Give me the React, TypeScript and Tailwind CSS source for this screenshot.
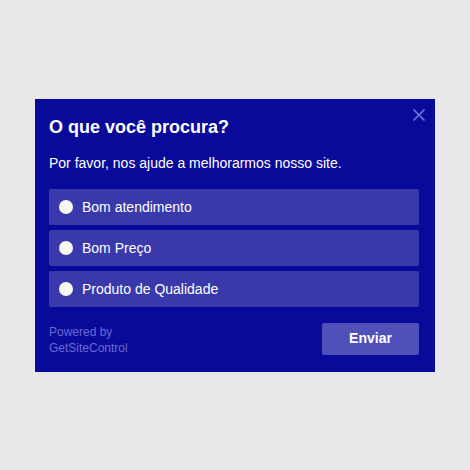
import { useState } from 'react'

const options = ['Bom atendimento', 'Bom Preço', 'Produto de Qualidade']

export default function App() {
  const [selected, setSelected] = useState<number | null>(null)

  return (
    <div className="w-[470px] h-[470px] bg-[#e8e8e8] flex items-center justify-center font-['Liberation_Sans',Arial,sans-serif]">
      <div className="relative w-[400px] h-[273px] bg-[#0a0a9a] pt-[18px] pl-[14px] pr-[16px] pb-[17px] text-white">
        <button className="absolute top-[9px] right-[9px] w-[14px] h-[14px] text-[#7575dd]">
          <svg viewBox="0 0 14 14" className="w-full h-full" fill="none" stroke="currentColor" strokeWidth="1.6">
            <path d="M1.5 1.5 L12.5 12.5 M12.5 1.5 L1.5 12.5" />
          </svg>
        </button>

        <h1 className="text-[18px] leading-[21px] font-bold">O que você procura?</h1>
        <p className="mt-[17px] text-[14px] leading-[16px]">Por favor, nos ajude a melhorarmos nosso site.</p>

        <div className="mt-[18px] flex flex-col gap-[5px]">
          {options.map((opt, i) => (
            <label
              key={opt}
              onClick={() => setSelected(i)}
              className="h-[36px] bg-[#3939ab] rounded-[2px] flex items-center pl-[10px] gap-[9px] cursor-pointer"
            >
              <span className="w-[14px] h-[14px] rounded-full bg-[#f8f8f0] flex items-center justify-center">
                {selected === i && <span className="w-[6px] h-[6px] rounded-full bg-[#0a0a9a]" />}
              </span>
              <span className="text-[14px] pt-[2px]">{opt}</span>
            </label>
          ))}
        </div>

        <div className="mt-[16px] flex items-start justify-between">
          <div className="text-[12px] leading-[16px] text-[#6a6ad0] pt-[1px]">
            Powered by
            <br />
            GetSiteControl
          </div>
          <button className="w-[97px] h-[32px] bg-[#5050ba] rounded-[2px] text-[14px] font-bold">Enviar</button>
        </div>
      </div>
    </div>
  )
}
